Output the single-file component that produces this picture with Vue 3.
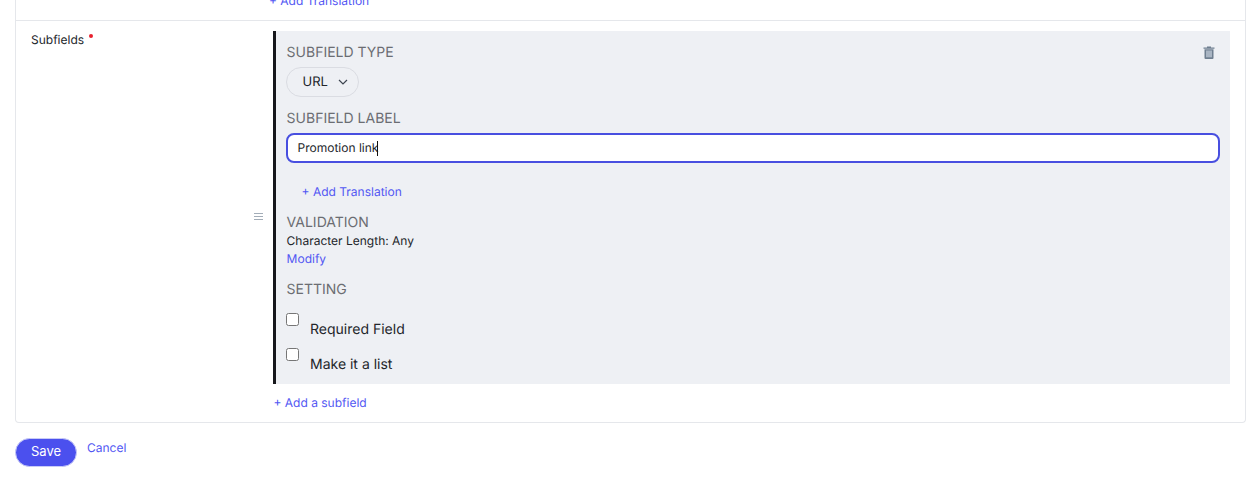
<script setup>
const settings = ['Required Field', 'Make it a list']
</script>

<template>
  <div class="page">
    <section class="card">
      <div class="row-top">
        <a class="link top-link">+ Add Translation</a>
      </div>
      <div class="row">
        <div class="row-label">Subfields<span class="req"></span></div>
        <div class="handle-col">
          <svg class="handle" width="9" height="8" viewBox="0 0 9 8">
            <path d="M0 .5h9M0 3.5h9M0 6.5h9" stroke="#a3adb8" stroke-width="1" fill="none" />
          </svg>
        </div>
        <div class="row-body">
          <div class="panel">
            <svg class="trash" width="12" height="13" viewBox="0 0 12 13">
              <path d="M4 1.5V.6h4v.9h3.5v1.2H.5V1.500z" fill="#6f7f90" />
              <path d="M1.500 3.200h9V12a1 1 0 0 1-1 1h-7a1 1 0 0 1-1-1z" fill="#6f7f90" />
              <rect x="3" y="4.500" width="6" height="6.800" fill="#a9b5c3" />
            </svg>
            <h4 class="head first">Subfield Type</h4>
            <div class="pill">
              <span>URL</span>
              <svg width="10" height="6" viewBox="0 0 10 6">
                <path d="M1 1l4 4 4-4" fill="none" stroke="#3d4450" stroke-width="1.200" />
              </svg>
            </div>
            <h4 class="head label-head">Subfield Label</h4>
            <div class="input">Promotion link<span class="caret"></span></div>
            <a class="link add-tr">+ Add Translation</a>
            <h4 class="head val-head">Validation</h4>
            <div class="val-text">Character Length: Any</div>
            <a class="link modify">Modify</a>
            <h4 class="head set-head">Setting</h4>
            <div class="checks">
              <label v-for="s in settings" :key="s" class="check">
                <span class="box"></span>
                <span class="check-text">{{ s }}</span>
              </label>
            </div>
          </div>
          <a class="link add-sub">+ Add a subfield</a>
        </div>
      </div>
    </section>
    <div class="actions">
      <button class="save">Save</button>
      <a class="link cancel">Cancel</a>
    </div>
  </div>
</template>

<style>
html, body { margin: 0; background: #fff; overflow: hidden; }
</style>

<style scoped>
.page {
  height: 482px;
  overflow: hidden;
  padding: 0 14px 0 15px;
  box-sizing: border-box;
  font-family: Inter, "Liberation Sans", sans-serif;
  font-size: 12px;
  color: #23262b;
  text-rendering: geometricPrecision;
}
.card {
  margin-top: -10px;
  border: 1px solid #e5e7eb;
  border-top: 0;
  border-radius: 0 0 4px 4px;
  box-sizing: border-box;
  height: 433px;
}
.link { color: #5257f3; font-size: 12px; line-height: 16px; display: block; }
.row-top { height: 31px; box-sizing: border-box; border-bottom: 1px solid #e5e7eb; padding: 3px 0 0 253px; }
.row { display: flex; }
.row-label { width: 222px; padding: 11px 0 0 15px; box-sizing: border-box; line-height: 16px; position: relative; }
.req { position: absolute; left: 73px; top: 13px; width: 4px; height: 4px; border-radius: 50%; background: #e8202e; }
.handle-col { width: 35px; height: 353px; margin-top: 10px; display: flex; align-items: center; padding: 0 0 0 16px; box-sizing: border-box; }
.handle { margin-top: 18px; }
.row-body { width: 957px; }
.panel {
  position: relative;
  margin-top: 10px;
  height: 353px;
  box-sizing: border-box;
  background: #eef0f4;
  border-left: 3px solid #17181c;
  padding-left: 10.6px;
  padding-right: 10px;
  display: flex;
  flex-direction: column;
  align-items: flex-start;
}
.trash { position: absolute; right: 15px; top: 15px; }
.head { margin: 0; font-size: 14px; line-height: 18px; font-weight: 400; text-transform: uppercase; color: #6b6d72; }
.first { margin-top: 13px; }
.pill {
  margin: 5px 0 0 -.6px;
  width: 73px;
  height: 30px;
  box-sizing: border-box;
  border: 1px solid #dadce2;
  border-radius: 15px;
  display: flex;
  align-items: center;
  padding-left: 15.5px;
  gap: 10px;
  font-size: 13px;
  color: #23262b;
}
.label-head { margin-top: 13px; }
.input {
  margin: 5px 0 0 -.6px;
  width: 934px;
  height: 30px;
  box-sizing: border-box;
  background: #fff;
  border: 2px solid #484fe0;
  border-radius: 8px;
  padding-left: 9.5px;
  line-height: 26px;
  display: flex;
  align-items: center;
}
.caret { width: 1px; height: 15px; background: #111; margin-left: -1px; }
.add-tr { margin: 21px 0 0 15px; }
.val-head { margin-top: 14px; }
.val-text { line-height: 16px; margin-top: 1px; }
.modify { margin-top: 2px; }
.set-head { margin-top: 14px; }
.checks { display: flex; flex-direction: column; gap: 15px; margin: 14px 0 0 -.6px; }
.check { display: flex; align-items: flex-start; height: 20px; gap: 11px; }
.box { width: 13px; height: 13px; box-sizing: border-box; background: #fff; border: 1px solid #767676; border-radius: 2.500px; }
.check-text { font-size: 14px; line-height: 18px; margin-top: 8px; }
.add-sub { margin: 11px 0 0 .5px; }
.actions { display: flex; align-items: flex-start; gap: 10px; margin-top: 15px; }
.save {
  width: 62px;
  height: 29px;
  padding: 0 0 3px;
  background: #4b50ee;
  color: #fff;
  border: 1px solid #c9cbf7;
  border-radius: 15px;
  font: 13px Inter, "Liberation Sans", sans-serif;
}
.cancel { line-height: 16px; margin-top: 2px; }
</style>
